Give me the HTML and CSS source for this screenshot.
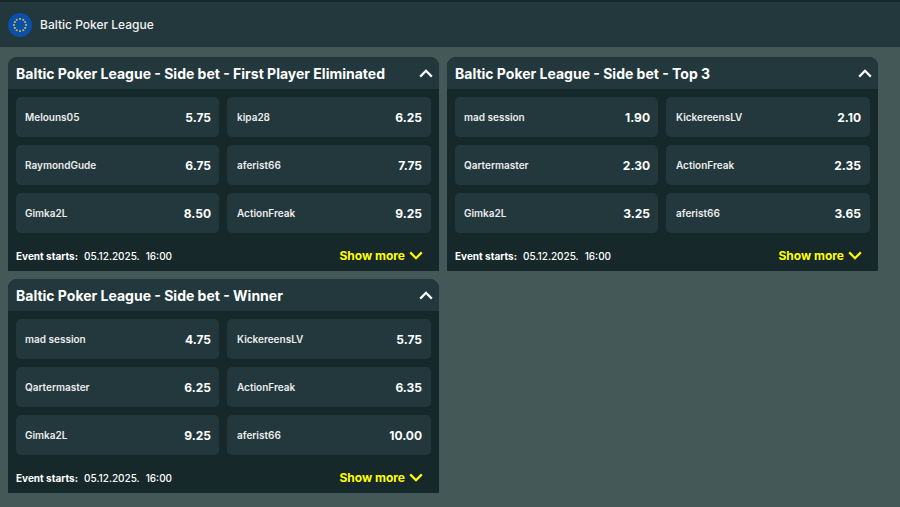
FILE: index.html
```html
<!DOCTYPE html>
<html lang="en">
<head>
    <meta charset="UTF-8">
    <meta name="viewport" content="width=device-width, initial-scale=1.0">
    <title>Baltic Poker League</title>
    <link rel="stylesheet" href="styles.css">
</head>
<body>

    <!-- Top bar -->
    <div class="topbar">
        <svg class="flag" width="24" height="24" viewBox="0 0 24 24">
            <circle cx="12" cy="12" r="12" fill="#0a4fa8"/>
            <g fill="#c9b84e">
                <rect x="11.1" y="5" width="1.8" height="1.8"/>
                <rect x="14.4" y="5.9" width="1.8" height="1.8"/>
                <rect x="16.3" y="8.2" width="1.8" height="1.8"/>
                <rect x="17.2" y="11.1" width="1.8" height="1.8"/>
                <rect x="16.3" y="14" width="1.8" height="1.8"/>
                <rect x="14.4" y="16.3" width="1.8" height="1.8"/>
                <rect x="11.1" y="17.2" width="1.8" height="1.8"/>
                <rect x="7.8" y="16.3" width="1.8" height="1.8"/>
                <rect x="5.9" y="14" width="1.8" height="1.8"/>
                <rect x="5" y="11.1" width="1.8" height="1.8"/>
                <rect x="5.9" y="8.2" width="1.8" height="1.8"/>
                <rect x="7.8" y="5.9" width="1.8" height="1.8"/>
            </g>
        </svg>
        <span class="topbar-title">Baltic Poker League</span>
    </div>

    <!-- Markets -->
    <div class="markets">

        <div class="card">
            <div class="card-head">
                <span>Baltic Poker League - Side bet - First Player Eliminated</span>
                <svg class="chevron" width="14" height="9" viewBox="0 0 14 9"><path d="M1.2 7.6 7 1.8l5.8 5.8" fill="none" stroke="#fff" stroke-width="2.2"/></svg>
            </div>
            <div class="odds">
                <div class="odd"><span>Melouns05</span><b>5.75</b></div>
                <div class="odd"><span>kipa28</span><b>6.25</b></div>
                <div class="odd"><span>RaymondGude</span><b>6.75</b></div>
                <div class="odd"><span>aferist66</span><b>7.75</b></div>
                <div class="odd"><span>Gimka2L</span><b>8.50</b></div>
                <div class="odd"><span>ActionFreak</span><b>9.25</b></div>
            </div>
            <div class="card-foot">
                <div class="starts"><b>Event starts:</b><span>05.12.2025.</span><span>16:00</span></div>
                <div class="more">Show more
                    <svg width="14" height="9" viewBox="0 0 14 9"><path d="M1.2 1.4 7 7.2l5.8-5.8" fill="none" stroke="#ffff00" stroke-width="2.2"/></svg>
                </div>
            </div>
        </div>

        <div class="card">
            <div class="card-head">
                <span>Baltic Poker League - Side bet - Top 3</span>
                <svg class="chevron" width="14" height="9" viewBox="0 0 14 9"><path d="M1.2 7.6 7 1.8l5.8 5.8" fill="none" stroke="#fff" stroke-width="2.2"/></svg>
            </div>
            <div class="odds">
                <div class="odd"><span>mad session</span><b>1.90</b></div>
                <div class="odd"><span>KickereensLV</span><b>2.10</b></div>
                <div class="odd"><span>Qartermaster</span><b>2.30</b></div>
                <div class="odd"><span>ActionFreak</span><b>2.35</b></div>
                <div class="odd"><span>Gimka2L</span><b>3.25</b></div>
                <div class="odd"><span>aferist66</span><b>3.65</b></div>
            </div>
            <div class="card-foot">
                <div class="starts"><b>Event starts:</b><span>05.12.2025.</span><span>16:00</span></div>
                <div class="more">Show more
                    <svg width="14" height="9" viewBox="0 0 14 9"><path d="M1.2 1.4 7 7.2l5.8-5.8" fill="none" stroke="#ffff00" stroke-width="2.2"/></svg>
                </div>
            </div>
        </div>

        <div class="card">
            <div class="card-head">
                <span>Baltic Poker League - Side bet - Winner</span>
                <svg class="chevron" width="14" height="9" viewBox="0 0 14 9"><path d="M1.2 7.6 7 1.8l5.8 5.8" fill="none" stroke="#fff" stroke-width="2.2"/></svg>
            </div>
            <div class="odds">
                <div class="odd"><span>mad session</span><b>4.75</b></div>
                <div class="odd"><span>KickereensLV</span><b>5.75</b></div>
                <div class="odd"><span>Qartermaster</span><b>6.25</b></div>
                <div class="odd"><span>ActionFreak</span><b>6.35</b></div>
                <div class="odd"><span>Gimka2L</span><b>9.25</b></div>
                <div class="odd"><span>aferist66</span><b>10.00</b></div>
            </div>
            <div class="card-foot">
                <div class="starts"><b>Event starts:</b><span>05.12.2025.</span><span>16:00</span></div>
                <div class="more">Show more
                    <svg width="14" height="9" viewBox="0 0 14 9"><path d="M1.2 1.4 7 7.2l5.8-5.8" fill="none" stroke="#ffff00" stroke-width="2.2"/></svg>
                </div>
            </div>
        </div>

    </div>

</body>
</html>
```

FILE: styles.css
```css
html, body {
    height: 100%;
}
body {
    font-family: Inter, "Liberation Sans", sans-serif;
    background-color: #435857;
    color: #fff;
    margin: 0;
    padding: 0;
    overflow: hidden;
}
.topbar {
    background-color: #22383c;
    border-top: 2px solid #162829;
    height: 45px;
    padding-left: 8px;
    display: flex;
    align-items: center;
    gap: 8px;
}
.topbar-title {
    font-size: 12px;
    font-weight: 500;
    color: #f2f2f2;
}
.flag {
    flex: none;
}
.markets {
    display: grid;
    grid-template-columns: 431px 431px;
    gap: 8px;
    padding: 10px 8px 0;
}
.card {
    background-color: #162829;
    border-radius: 9px 9px 0 0;
    overflow: hidden;
}
.card-head {
    background-color: #22383c;
    height: 32px;
    padding: 0 6px 0 8px;
    display: flex;
    justify-content: space-between;
    align-items: center;
    font-size: 14px;
    font-weight: 700;
}
.odds {
    display: grid;
    grid-template-columns: 203px 1fr;
    gap: 8px;
    padding: 8px 8px 0;
}
.odd {
    background-color: #22383c;
    border-radius: 5px;
    height: 40px;
    padding: 0 8px 0 9px;
    display: flex;
    justify-content: space-between;
    align-items: center;
    font-size: 10px;
    font-weight: 600;
    color: #ececec;
}
.odd:nth-child(even) {
    padding: 0 9px 0 10px;
}
.odd b {
    font-size: 12px;
    font-weight: 700;
    color: #fff;
}
.card-foot {
    height: 30px;
    padding: 8px 16px 0 8px;
    display: flex;
    justify-content: space-between;
    align-items: center;
}
.starts {
    display: flex;
    gap: 6px;
    font-size: 10px;
    font-weight: 500;
}
.starts b {
    font-weight: 700;
}
.more {
    display: flex;
    align-items: center;
    gap: 4px;
    margin-bottom: 2px;
    font-size: 12px;
    font-weight: 700;
    color: #ffff00;
}
```
